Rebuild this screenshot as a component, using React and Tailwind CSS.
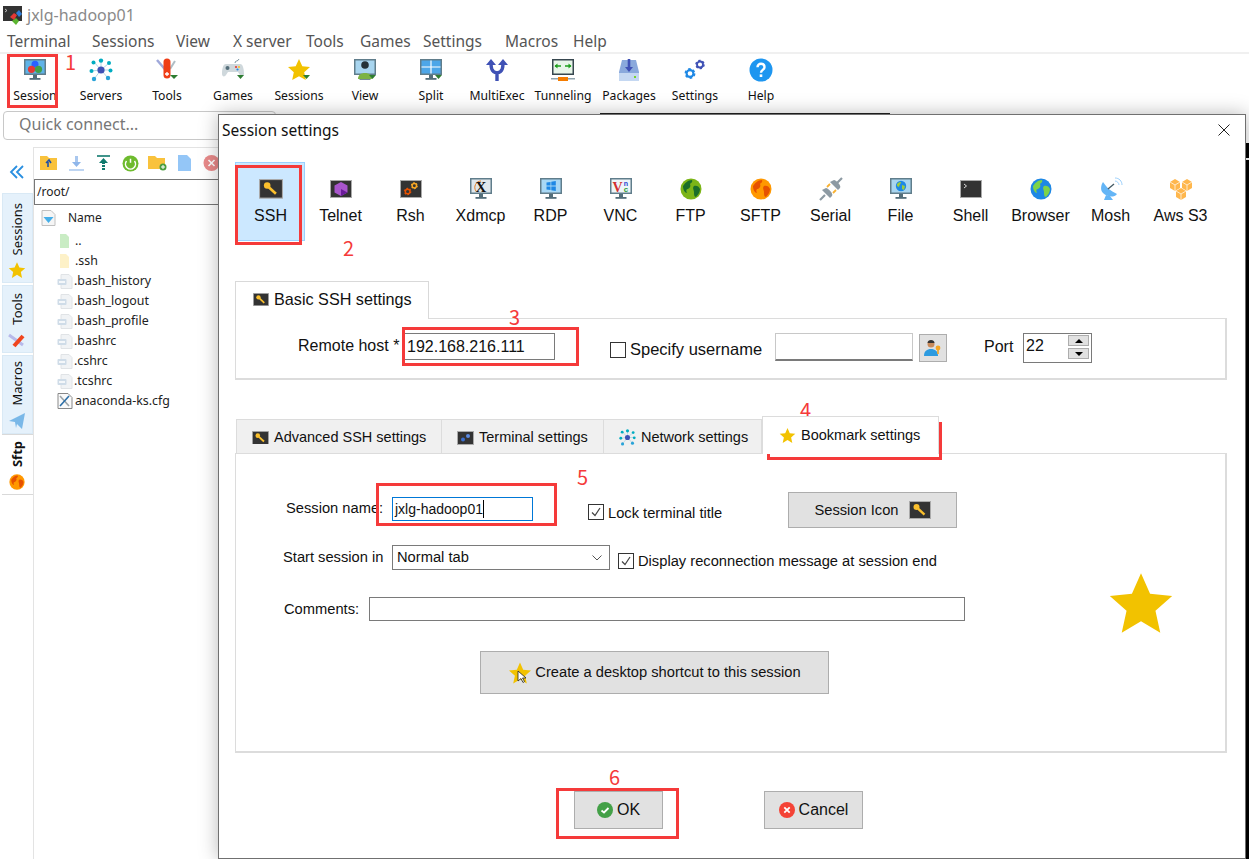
import React from "react";

const Frame = ({ children }) => (
  <svg width="24" height="24" viewBox="0 0 24 24">{children}</svg>
);
const Drop = () => <path d="M16 17h7l-3.5 4z" fill="#2e7d32" />;
const Monitor = ({ screen = "#b3dcf7", children }) => (
  <>
    <rect x="1" y="1" width="22" height="16" fill="#607d8b" />
    <rect x="2.5" y="2.5" width="19" height="13" fill={screen} />
    <rect x="10" y="17" width="4" height="3" fill="#546e7a" />
    <rect x="6.5" y="20" width="11" height="1.8" fill="#546e7a" />
    {children}
  </>
);
const KeyIcon = ({ size = 24 }) => (
  <svg width={size} height={size * 0.82} viewBox="0 0 22 18">
    <rect x="0.5" y="0.5" width="21" height="17" fill="#333" stroke="#aaa" />
    <circle cx="7.5" cy="6" r="3" fill="#fbc02d" />
    <path d="M9 7.500l6.500 6" stroke="#fbc02d" strokeWidth="2.400" />
  </svg>
);
const Term = ({ children }) => (
  <svg width="24" height="24" viewBox="0 0 24 24">
    <rect x="1.5" y="3.5" width="21" height="17" fill="#333" stroke="#aaa" />
    {children}
  </svg>
);
const Globe = ({ sea, land, size = 22 }) => (
  <svg width={size} height={size} viewBox="0 0 22 22">
    <circle cx="11" cy="11" r="10.500" fill={sea} />
    <path d="M3 8c2-3 5-6 9-6 1 2-1 3-2 4 1 2 0 4-2 5-2 0-2 2-1 4-2 0-4-3-4-7zM14 8c2-1 5 0 6 3 0 3-2 6-4 8-2 0-2-3-2-5s-2-4 0-6z" fill={land} />
  </svg>
);
const Star = ({ size = 22 }) => (
  <svg width={size} height={size} viewBox="0 0 24 24">
    <path d="M12 1.500l3.200 7.200 7.800.8-5.900 5.200 1.700 7.800L12 18.400l-6.800 4.100 1.700-7.800L1 9.500l7.800-.8z" fill="#f2c200" />
  </svg>
);
const Gear = ({ x, y, r, c }) => (
  <g>
    <circle cx={x} cy={y} r={r} fill="none" stroke={c} strokeWidth={r * 0.62} />
    <circle cx={x} cy={y} r={r * 1.35} fill="none" stroke={c} strokeWidth={r * 0.5} strokeDasharray={`${r * 0.75} ${r * 0.66}`} />
  </g>
);
const Network = ({ size = 24 }) => (
  <svg width={size} height={size} viewBox="0 0 24 24">
    <g stroke="#9ecbe0" strokeWidth="0.8">
      <path d="M12 12L5 4M12 12L12 2M12 12L20 5M12 12L2 13M12 12L22 12M12 12L5 21M12 12L19 20" />
    </g>
    <circle cx="12" cy="12" r="3.600" fill="#3f51b5" />
    <circle cx="12" cy="2.600" r="2.200" fill="#00acc1" />
    <circle cx="20" cy="5" r="2" fill="#00acc1" />
    <circle cx="4.500" cy="4.500" r="2" fill="#00acc1" />
    <circle cx="2.500" cy="13" r="2" fill="#00acc1" />
    <circle cx="21.500" cy="12.500" r="2" fill="#00acc1" />
    <circle cx="5" cy="21" r="2.200" fill="#29a3d8" />
    <circle cx="19" cy="20" r="2.200" fill="#29a3d8" />
  </svg>
);
const Knife = () => (
  <Frame>
    <path d="M2 2l12 14" stroke="#9fa8da" strokeWidth="2.500" />
    <path d="M20 3l-5 8" stroke="#b0bec5" strokeWidth="2" />
    <rect x="8.500" y="0.500" width="7" height="20" rx="3.500" fill="#ef3d16" />
    <path d="M12 14v4M10 16h4" stroke="#fff" strokeWidth="1.300" />
    <path d="M15 17h8l-4 4z" fill="#2e7d32" />
  </Frame>
);

const toolbar = [
  ["Session", <Frame key="a"><Monitor screen="#5fb3e8"><circle cx="12" cy="6.300" r="3.500" fill="#2962ff" /><circle cx="8.500" cy="11.300" r="3.600" fill="#e53935" /><circle cx="15.500" cy="11.300" r="3.600" fill="#43a047" /></Monitor></Frame>],
  ["Servers", <Network key="b" />],
  ["Tools", <Knife key="c" />],
  ["Games", <Frame key="d"><path d="M14 5c0-3 3-1 4-4" fill="none" stroke="#78909c" /><path d="M5 6h14c3 0 4 5 4 10 0 3-3 3-4 1l-2-3H7l-2 3c-1 2-4 2-4-1C1 11 2 6 5 6z" fill="#cfd8dc" /><circle cx="6.500" cy="10" r="2" fill="#546e7a" /><circle cx="15" cy="9" r="1.100" fill="#e53935" /><circle cx="18" cy="9" r="1.100" fill="#fbc02d" /><circle cx="16.500" cy="11.500" r="1.100" fill="#1e88e5" /><Drop /></Frame>],
  ["Sessions", <Frame key="e"><path d="M12 1l3.300 7.300 7.700.8-5.800 5.200 1.600 7.700L12 18.300 5.200 22l1.600-7.700L1 9.100l7.700-.8z" fill="#f2c200" /><Drop /></Frame>],
  ["View", <Frame key="f"><Monitor screen="#a8d5ef"><circle cx="12" cy="7" r="3.800" fill="#263238" /><path d="M5 21c0-4 3-6 7-6s7 2 7 6z" fill="#7cb342" /></Monitor><Drop /></Frame>],
  ["Split", <Frame key="g"><Monitor screen="#4da6e8"><path d="M2.500 9h19M12 2.500v13" stroke="#fff" strokeWidth="1.200" /></Monitor><Drop /></Frame>],
  ["MultiExec", <Frame key="h"><path d="M12 23v-8M12 15C6 14 6 9 6 4M12 15c6-1 6-6 6-11" fill="none" stroke="#3f51b5" strokeWidth="3.400" /><path d="M1 7l5-6 5 6zM13 7l5-6 5 6z" fill="#3f51b5" /></Frame>],
  ["Tunneling", <Frame key="i"><rect x="1" y="1" width="22" height="16" fill="#37474f" /><rect x="2.500" y="2.500" width="19" height="13" fill="#e8f5e9" /><path d="M4 8h6M20 8h-6" stroke="#1b9e1b" strokeWidth="1.600" /><path d="M3.500 8l3-2.500v5zM20.500 8l-3-2.500v5z" fill="#1b9e1b" /><rect x="0" y="20" width="24" height="1.500" fill="#90a4ae" /><rect x="7" y="19" width="10" height="4" fill="#f57c00" /></Frame>],
  ["Packages", <Frame key="j"><path d="M5 2h14l3 12v8H2v-8z" fill="#8aa9dc" /><rect x="2" y="15" width="20" height="8" fill="#c5d8f2" /><rect x="17" y="18" width="2" height="2" fill="#76d52b" /><path d="M12 1v10" stroke="#3f51b5" strokeWidth="2.600" /><path d="M8 9h8l-4 5z" fill="#3f51b5" /></Frame>],
  ["Settings", <Frame key="k"><Gear x={17} y={6.500} r={3} c="#3f51b5" /><Gear x={7} y={15.500} r={3.400} c="#1e88e5" /></Frame>],
  ["Help", <Frame key="l"><circle cx="12" cy="12" r="11.500" fill="#1e96f0" /><path d="M8.500 9.200c0-4.600 7-4.600 7 0 0 2.800-3.500 2.600-3.500 5.500" fill="none" stroke="#fff" strokeWidth="2.400" /><rect x="10.700" y="16.400" width="2.600" height="2.600" fill="#fff" /></Frame>],
];

const protocols = [
  ["SSH", <KeyIcon key="1" />],
  ["Telnet", <Term key="2"><path d="M12 5l6.500 3.500v7L12 19l-6.500-3.500v-7z" fill="#a855cc" /><path d="M12 12l6.500 3.500L12 19z" fill="#6a1b9a" /></Term>],
  ["Rsh", <Term key="3"><svg x="1" y="2" width="22" height="20" viewBox="0 0 24 24"><Gear x={16} y={8} r={2.600} c="#f9a825" /><Gear x={8} y={15} r={2.800} c="#e65100" /></svg></Term>],
  ["Xdmcp", <Frame key="4"><Monitor screen="#dfe7ec"><path d="M7 14c-3-4 0-10 5-10" fill="none" stroke="#e67e22" strokeWidth="1" /><text x="12" y="14.500" fontSize="15" fontWeight="700" textAnchor="middle" fontFamily="Liberation Serif, serif" fill="#111">X</text></Monitor></Frame>],
  ["RDP", <Frame key="5"><Monitor screen="#a8d8f5"><path d="M7.500 5.500l4-.6v3.700h-4zM12.300 4.800l4.500-.7v4.500h-4.500zM7.500 9.400h4v3.700l-4-.6zM12.300 9.400h4.500v4.500l-4.500-.7z" fill="#1e88e5" /></Monitor></Frame>],
  ["VNC", <Frame key="6"><Monitor screen="#eef5f9"><text x="8.500" y="14.500" fontSize="14" fontWeight="700" textAnchor="middle" fontFamily="Liberation Serif, serif" fill="#d32f2f">V</text><text x="17" y="8.500" fontSize="7" fontWeight="700" textAnchor="middle" fontFamily="Liberation Sans, sans-serif" fill="#1e40d0">n</text><text x="17" y="15" fontSize="8" fontWeight="700" textAnchor="middle" fontFamily="Liberation Sans, sans-serif" fill="#2e9d3a">c</text></Monitor></Frame>],
  ["FTP", <Globe key="7" sea="#7cb518" land="#1b6e2a" />],
  ["SFTP", <Globe key="8" sea="#ff9800" land="#e65100" />],
  ["Serial", <Frame key="9"><path d="M1 23l5-5M18 6l5-5" stroke="#8d9aa3" strokeWidth="2.200" /><path d="M3 13l8 8 2-2c2-2-4-8-6-8zM11 5l8 8 2-2c2-2-4-8-6-8z" fill="#8d9aa3" /><path d="M8 10l3-3M14 16l3-3" stroke="#f9b233" strokeWidth="1.800" /></Frame>],
  ["File", <Frame key="10"><Monitor screen="#a8d5ef"><circle cx="12" cy="9" r="5.200" fill="#1e88e5" /><path d="M8 7c2-2 3-2 4-2 0 2-2 3-2 5l-2-1zM13 8l3 1-1 4-2-1z" fill="#9ccc3c" /></Monitor></Frame>],
  ["Shell", <Term key="11"><path d="M5 7l2.500 2L5 11" fill="none" stroke="#eee" strokeWidth="0.900" /></Term>],
  ["Browser", <Globe key="12" sea="#1e88e5" land="#7ed348" />],
  ["Mosh", <Frame key="13"><path d="M4 5c4 6 8 9 14 12-3 4-10 3-14-1-3-3-2-8 0-11z" fill="#64b5f6" /><path d="M9 12l6-5" stroke="#455a64" strokeWidth="1.300" /><path d="M7 18l-2 5h9l-3-4z" fill="#64b5f6" /><path d="M16 4c2 0 4 2 4 4M16 1c4 0 7 3 7 7" fill="none" stroke="#90caf9" strokeWidth="0.900" /></Frame>],
  ["Aws S3", <Frame key="14"><g fill="#ffb74d"><path d="M1 5l5-3 5 3v6l-5 3-5-3zM13 5l5-3 5 3v6l-5 3-5-3zM7 14l5-3 5 3v6l-5 3-5-3z" /></g><g stroke="#fff" strokeWidth="0.700" fill="none"><path d="M1 5l5 3 5-3M6 8v6M13 5l5 3 5-3M18 8v6M7 14l5 3 5-3M12 17v6" /></g></Frame>],
];

const menu = [
  ["Terminal", "w-[85px]"],
  ["Sessions", "w-[84px]"],
  ["View", "w-[57px]"],
  ["X server", "w-[73px]"],
  ["Tools", "w-[54px]"],
  ["Games", "w-[63px]"],
  ["Settings", "w-[82px]"],
  ["Macros", "w-[68px]"],
  ["Help", "w-[50px]"],
];

const files = [".bash_history", ".bash_logout", ".bash_profile", ".bashrc", ".cshrc", ".tcshrc"];

const FileGlyph = () => (
  <svg width="16" height="15" viewBox="0 0 16 15">
    <path d="M4 0.500h8l3 3v11H4z" fill="#f1f3f5" stroke="#e0e3e6" />
    <rect x="0.500" y="5" width="9" height="6" rx="1" fill="#cfdce8" />
    <rect x="2" y="7" width="6" height="2" fill="#f4f7fa" />
  </svg>
);
const FolderGlyph = ({ c }) => (
  <svg width="10" height="14" viewBox="0 0 10 14">
    <path d="M0 0h6l3 3v11H0z" fill={c} />
  </svg>
);

const Check = ({ checked }) => (
  <span className="flex h-[16px] w-[16px] shrink-0 items-center justify-center border border-[#333] bg-white">
    {checked && (
      <svg width="12" height="12" viewBox="0 0 12 12">
        <path d="M2 6.500l3 3 5-7.500" fill="none" stroke="#444" strokeWidth="1.200" />
      </svg>
    )}
  </span>
);

const VTab = ({ label, h, icon, active }) => (
  <div
    className={`flex w-[31px] shrink-0 flex-col items-center justify-end pb-[3px] ${h} ${
      active ? "border-y border-[#d9d9d9] bg-white font-bold" : "border border-[#d9e9f5] bg-[#e5f1fb]"
    }`}
  >
    <span className="rotate-180 text-[13px] leading-[16px] text-[#111] [writing-mode:vertical-rl]">{label}</span>
    <span className="mt-[6px] flex h-[18px] items-center">{icon}</span>
  </div>
);

const Btn = ({ className, children }) => (
  <div className={`flex items-center justify-center border border-[#adadad] bg-[#e1e1e1] ${className}`}>{children}</div>
);

const Red = ({ className }) => (
  <div className={`pointer-events-none absolute border-[3px] border-[#f53a3a] ${className}`} />
);
const Num = ({ className, children }) => (
  <div className={`absolute text-[20px] leading-[20px] text-[#f53a3a] ${className}`} style={{ fontFamily: '"Noto Sans CJK SC", sans-serif' }}>
    {children}
  </div>
);

const sans = { fontFamily: '"Liberation Sans", Arial, sans-serif' };
const ui = { fontFamily: '"Noto Sans", sans-serif' };

export default function App() {
  return (
    <div className="relative h-[859px] w-[1249px] overflow-hidden bg-white" style={ui}>
      <div className="flex h-[30px] items-center pl-[3px]">
        <svg width="20" height="20" viewBox="0 0 20 20">
          <rect x="0" y="1" width="19" height="15" fill="#333" />
          <path d="M2 4l2 1.500L2 7" fill="none" stroke="#ddd" strokeWidth="0.800" />
          <path d="M7 12l4-4 3 2-3 5z" fill="#e53935" />
          <path d="M13 8l3-3 3 4-3 3z" fill="#2e7dd7" />
          <path d="M9 16l4-3 3 3-3 4z" fill="#5cb531" />
        </svg>
        <span className="ml-[4px] text-[16px] leading-[20px] text-[#8a8a8a]">jxlg-hadoop01</span>
      </div>
      <div className="flex h-[22px] items-center pl-[7px]">
        {menu.map(([m, w]) => (
          <span key={m} className={`${w} shrink-0 text-[15.5px] leading-[20px] text-[#555]`}>{m}</span>
        ))}
      </div>
      <div className="h-[2px] bg-[#f0f0f0]" />
      <div className="flex h-[59px] pl-[2px]">
        {toolbar.map(([label, icon], i) => (
          <div key={label + i} className="flex w-[66px] shrink-0 flex-col items-center pt-[4px]">
            {icon}
            <span className="mt-[6px] text-[12.2px] leading-[16px] text-[#111]">{label}</span>
          </div>
        ))}
      </div>
      <div className="ml-[3px] -mt-[2px] flex h-[29px] w-[273px] items-center rounded-[4px] border border-[#c8c8c8] bg-white pb-[4px] pl-[15px] text-[16px] text-[#777]">
        Quick connect...
      </div>
      <div className="flex">
        <div className="flex w-[33px] shrink-0 flex-col items-center pl-[1px] pt-[24px]">
          <svg width="16" height="16" viewBox="0 0 16 16" className="mb-[13px]">
            <path d="M8 2L2 8l6 6M14 2L8 8l6 6" fill="none" stroke="#2a8fe0" strokeWidth="1.800" />
          </svg>
          <VTab h="h-[90px]" label="Sessions" icon={<Star size={18} />} />
          <div className="h-[2px]" />
          <VTab h="h-[68px]" label="Tools" icon={<svg width="18" height="16" viewBox="0 0 18 16"><path d="M1 3l14 10" stroke="#b7b9ea" strokeWidth="3" /><path d="M15 4L6 14" stroke="#f0451e" strokeWidth="4" /></svg>} />
          <div className="h-[2px]" />
          <VTab h="h-[79px]" label="Macros" icon={<svg width="16" height="16" viewBox="0 0 16 16"><path d="M0 8L16 0l-3 16-5-5-1 4-1-6z" fill="#7ab8e8" /></svg>} />
          <VTab h="h-[61px]" label="Sftp" active icon={<Globe size={16} sea="#ff9800" land="#e65100" />} />
        </div>
        <div className="mt-[7px] h-[720px] w-[215px] shrink-0 border-l border-t border-[#e3e3e3] pt-[2px]">
          <div className="flex h-[26px] items-center gap-[8px] pl-[6px]">
            <svg width="19" height="16" viewBox="0 0 19 16"><path d="M0 1h7l2 2h8v12H0z" fill="#f9c23c" /><path d="M8 12V7M6 8l3-3 2 3" fill="none" stroke="#1d4fa8" strokeWidth="1.600" /></svg>
            <svg width="19" height="16" viewBox="0 0 19 16"><path d="M9.500 1v8" stroke="#a9c7ee" strokeWidth="3" /><path d="M5 7h9l-4.500 5z" fill="#8fb6ea" /><path d="M2 15h15" stroke="#a9c7ee" strokeWidth="1.500" /></svg>
            <svg width="19" height="16" viewBox="0 0 19 16"><path d="M3 1h13" stroke="#117a6e" strokeWidth="1.600" /><path d="M5 8l4.500-5L14 8z" fill="#117a6e" /><path d="M9.500 7v8" stroke="#117a6e" strokeWidth="3" strokeDasharray="2 1" /></svg>
            <svg width="19" height="17" viewBox="0 0 19 17"><circle cx="9.500" cy="8.500" r="8" fill="#6ebb2e" /><path d="M9.500 3.800v4M5.500 6a5 5 0 1 0 8 0" fill="none" stroke="#fff" strokeWidth="1.500" /></svg>
            <svg width="19" height="16" viewBox="0 0 19 16"><path d="M0 1h7l2 2h8v11H0z" fill="#f9c23c" /><circle cx="15" cy="12" r="3.500" fill="#4a9d3f" /><path d="M13 12h4M15 10v4" stroke="#fff" /></svg>
            <svg width="19" height="16" viewBox="0 0 19 16"><path d="M3 0h9l4 4v12H3z" fill="#94c6f7" /></svg>
            <svg width="19" height="16" viewBox="0 0 19 16"><circle cx="9.500" cy="8" r="8" fill="#e98a8a" /><path d="M6.500 5l6 6M12.500 5l-6 6" stroke="#fff" strokeWidth="1.600" /></svg>
          </div>
          <div className="mt-[3px] flex h-[26px] items-center border border-[#777] pl-[2px] text-[12px] text-[#222]">/root/</div>
          <div className="flex h-[26px] items-center pl-[7px] text-[12px] text-[#222]">
            <svg width="15" height="16" viewBox="0 0 15 16"><path d="M1 .5h9l4 4v11H1z" fill="#f5f5f5" stroke="#c0c0c0" /><path d="M2.500 7h10l-5 6z" fill="#45aee8" /></svg>
            <span className="ml-[12px]">Name</span>
          </div>
          <div className="flex h-[20px] items-center pl-[26px] text-[12.4px] text-[#222]"><FolderGlyph c="#c9ecc4" /><span className="ml-[5px]">..</span></div>
          <div className="flex h-[20px] items-center pl-[26px] text-[12.4px] text-[#222]"><FolderGlyph c="#fdf1c8" /><span className="ml-[5px]">.ssh</span></div>
          {files.map((f) => (
            <div key={f} className="flex h-[20px] items-center pl-[23px] text-[12.4px] text-[#222]">
              <FileGlyph />
              <span className="ml-[1px]">{f}</span>
            </div>
          ))}
          <div className="flex h-[20px] items-center pl-[23px] text-[12.4px] text-[#222]">
            <svg width="16" height="16" viewBox="0 0 16 16"><path d="M1 .5h10l4 4v11H1z" fill="#fafafa" stroke="#888" /><path d="M3 3l9 10" stroke="#9aa3a8" strokeWidth="1.600" /><path d="M12 3L3 13" stroke="#2c6fa8" strokeWidth="1.600" /></svg>
            <span className="ml-[2px]">anaconda-ks.cfg</span>
          </div>
        </div>
      </div>

      {/* terminal windows showing behind the dialog */}
      <div className="absolute left-[600px] top-[113px] h-[1px] w-[290px] bg-[#222]" />
      <div className="absolute left-[1246px] top-[143px] h-[15px] w-[3px] bg-black" />
      <div className="absolute left-[1246px] top-[160px] h-[699px] w-[3px] bg-black" />

      {/* dialog */}
      <div
        className="absolute left-[218px] top-[114px] h-[745px] w-[1028px] border border-[#707070] bg-white shadow-[0_0_18px_rgba(0,0,0,0.28)]"
        style={sans}
      >
        <div className="flex h-[30px] items-center justify-between pl-[3px] pr-[15px]">
          <span className="text-[15.5px] leading-[20px] text-[#111]" style={ui}>Session settings</span>
          <svg width="12" height="12" viewBox="0 0 12 12">
            <path d="M0.500 0.500l11 11M11.500 0.500l-11 11" stroke="#222" strokeWidth="1" />
          </svg>
        </div>
        <div className="ml-[16px] mt-[17px] flex h-[79px]">
          {protocols.map(([label, icon], i) => (
            <div
              key={label}
              className={`flex w-[70px] shrink-0 flex-col items-center pl-[1px] pt-[14px] ${
                i === 0 ? "border border-[#99d1ff] bg-[#cce8ff]" : "border border-transparent"
              }`}
            >
              <div className="flex h-[24px] items-center">{icon}</div>
              <span className="mt-[6px] text-[16px] leading-[18px] text-[#111]">{label}</span>
            </div>
          ))}
        </div>

        <div className="ml-[16px] mt-[40px] w-[992px]">
          <div className="relative z-10 -mb-px flex h-[38px] w-[194px] items-center gap-[5px] border border-b-0 border-[#d9d9d9] bg-white pb-[2px] pl-[17px] text-[16.2px] text-[#111]">
            <KeyIcon size={16} />
            <span>Basic SSH settings</span>
          </div>
          <div className="flex h-[62px] items-start border-2 border-l border-t border-[#dcdcdc] text-[16px] text-[#111]">
            <span className="ml-[62px] mt-[18px] w-[106px] shrink-0 leading-[18px]">Remote host *</span>
            <div className="mt-[14px] flex h-[27px] w-[151px] shrink-0 items-center border border-[#7a7a7a] pl-[2px]">192.168.216.111</div>
            <div className="ml-[55px] mt-[23px]"><Check /></div>
            <span className="ml-[4px] mt-[21px] w-[145px] shrink-0 text-[16.5px] leading-[18px]">Specify username</span>
            <div className="mt-[14px] h-[28px] w-[138px] shrink-0 border border-b-2 border-[#c8c8c8] border-b-[#7a7a7a]" />
            <Btn className="ml-[6px] mt-[15px] h-[28px] w-[28px] shrink-0">
              <svg width="20" height="20" viewBox="0 0 20 20"><circle cx="8" cy="6" r="3.500" fill="#c98a5a" /><path d="M4.500 5c0-4 7-4 7 0z" fill="#333" /><path d="M1 18c0-5 3-7 7-7s7 2 7 7z" fill="#2d9be0" /><circle cx="15" cy="10" r="2.400" fill="#f5a623" /><path d="M15 11v5" stroke="#f5a623" strokeWidth="1.600" /></svg>
            </Btn>
            <span className="ml-[37px] mt-[19px] w-[39px] shrink-0 leading-[18px]">Port</span>
            <div className="mt-[14px] flex h-[30px] w-[69px] shrink-0 justify-between border border-[#7a7a7a] pl-[2px] pr-[2px]">
              <span className="leading-[24px]">22</span>
              <div className="mt-[1px] flex flex-col gap-[2px]">
                <div className="flex h-[11px] w-[21px] items-center justify-center border border-[#adadad] bg-[#e1e1e1]"><span className="h-0 w-0 border-x-[4px] border-b-[4px] border-x-transparent border-b-black" /></div>
                <div className="flex h-[11px] w-[21px] items-center justify-center border border-[#adadad] bg-[#e1e1e1]"><span className="h-0 w-0 border-x-[4px] border-t-[4px] border-x-transparent border-t-black" /></div>
              </div>
            </div>
          </div>
        </div>

        <div className="ml-[16px] mt-[36px] w-[992px]">
          <div className="relative z-10 -mb-px flex h-[38px] items-end pl-px text-[14.5px] text-[#111]">
            <div className="flex h-[35px] w-[206px] items-center gap-[5px] border border-[#dcdcdc] bg-[#f0f0f0] pl-[15px] pt-[2px]">
              <KeyIcon size={17} /><span>Advanced SSH settings</span>
            </div>
            <div className="flex h-[35px] w-[162px] items-center gap-[5px] border border-l-0 border-[#dcdcdc] bg-[#f0f0f0] pl-[15px] pt-[2px]">
              <svg width="17" height="14" viewBox="0 0 17 14"><rect x="0.500" y="0.500" width="16" height="13" fill="#333" stroke="#aaa" /><circle cx="6" cy="8.500" r="2" fill="#3c6fd0" /><circle cx="11" cy="5" r="2" fill="#5c8ae0" /></svg>
              <span>Terminal settings</span>
            </div>
            <div className="flex h-[35px] w-[158px] items-center gap-[5px] border border-l-0 border-[#dcdcdc] bg-[#f0f0f0] pl-[15px] pt-[2px]">
              <Network size={17} /><span>Network settings</span>
            </div>
            <div className="flex h-[38px] w-[177px] items-start gap-[5px] border border-b-0 border-[#dcdcdc] bg-white pl-[16px] pt-[10px]">
              <Star size={17} /><span className="leading-[16px]">Bookmark settings</span>
            </div>
          </div>
          <div className="h-[300px] border-2 border-l border-t border-[#dcdcdc] text-[14.7px] text-[#111]">
            <div className="ml-[50px] mt-[38px] flex h-[36px] items-center">
              <span className="-mt-[4px] w-[106px] shrink-0 leading-[18px]">Session name:</span>
              <div className="-mt-[2px] flex h-[24px] w-[141px] shrink-0 items-center border border-[#0078d7] pl-[2px] text-[14px]">jxlg-hadoop01<span className="h-[18px] w-px bg-black" /></div>
              <div className="ml-[55px] mt-[3px]"><Check checked /></div>
              <span className="ml-[4px] mt-[6px] w-[180px] shrink-0 leading-[18px]">Lock terminal title</span>
              <Btn className="h-[36px] w-[169px] shrink-0 gap-[10px]">
                <span>Session Icon</span><KeyIcon size={22} />
              </Btn>
            </div>
            <div className="ml-[47px] mt-[17px] flex h-[25px] items-center">
              <span className="w-[109px] shrink-0">Start session in</span>
              <div className="flex h-[25px] w-[218px] shrink-0 items-center justify-between border border-[#7a7a7a] pl-[4px] pr-[7px]">
                <span>Normal tab</span>
                <svg width="10" height="6" viewBox="0 0 10 6"><path d="M0.500 0.500l4.500 4.500 4.500-4.500" fill="none" stroke="#555" /></svg>
              </div>
              <div className="ml-[8px] mt-[7px]"><Check checked /></div>
              <span className="ml-[4px] mt-[7px] whitespace-nowrap">Display reconnection message at session end</span>
            </div>
            <div className="ml-[48px] mt-[27px] flex h-[24px] items-center">
              <span className="w-[85px] shrink-0">Comments:</span>
              <div className="h-[24px] w-[596px] shrink-0 border border-[#7a7a7a]" />
              <div className="-my-[40px] -mt-[52px] ml-[142px] shrink-0"><Star size={68} /></div>
            </div>
            <Btn className="ml-[244px] mt-[30px] h-[43px] w-[349px] gap-[3px]">
              <span className="relative flex">
                <Star size={24} />
                <svg width="10" height="14" viewBox="0 0 10 14" className="absolute left-[9px] top-[9px]"><path d="M1 1v10l3-2.500 2 4 1.500-1-2-3.500h3.500z" fill="#fff" stroke="#222" strokeWidth="0.800" /></svg>
              </span>
              <span>Create a desktop shortcut to this session</span>
            </Btn>
          </div>
        </div>

        <div className="ml-[355px] mt-[38px] flex gap-[101px] text-[16px] text-[#111]">
          <Btn className="h-[38px] w-[89px] gap-[4px]">
            <svg width="16" height="16" viewBox="0 0 16 16"><circle cx="8" cy="8" r="8" fill="#43a047" /><path d="M4.500 8.500l2.500 2 4.500-4.500" fill="none" stroke="#fff" strokeWidth="1.800" /></svg>
            <span>OK</span>
          </Btn>
          <Btn className="h-[38px] w-[99px] gap-[4px]">
            <svg width="16" height="16" viewBox="0 0 16 16"><circle cx="8" cy="8" r="8" fill="#f44336" /><path d="M5.300 5.300l5.400 5.400M10.700 5.300l-5.400 5.400" stroke="#fff" strokeWidth="1.800" /></svg>
            <span>Cancel</span>
          </Btn>
        </div>
      </div>

      {/* red annotations */}
      <Red className="left-[7px] top-[54px] h-[54px] w-[51px]" />
      <Red className="left-[235px] top-[165px] h-[80px] w-[67px]" />
      <Red className="left-[402px] top-[327px] h-[39px] w-[177px]" />
      <Red className="left-[767px] top-[422px] h-[38px] w-[175px]" />
      <Red className="left-[376px] top-[483px] h-[43px] w-[181px]" />
      <Red className="left-[556px] top-[788px] h-[51px] w-[123px]" />
      <Num className="left-[65px] top-[52px]">1</Num>
      <Num className="left-[343px] top-[238px]">2</Num>
      <Num className="left-[509px] top-[307px]">3</Num>
      <Num className="left-[800px] top-[400px]">4</Num>
      <Num className="left-[577px] top-[467px]">5</Num>
      <Num className="left-[609px] top-[767px]">6</Num>
    </div>
  );
}
